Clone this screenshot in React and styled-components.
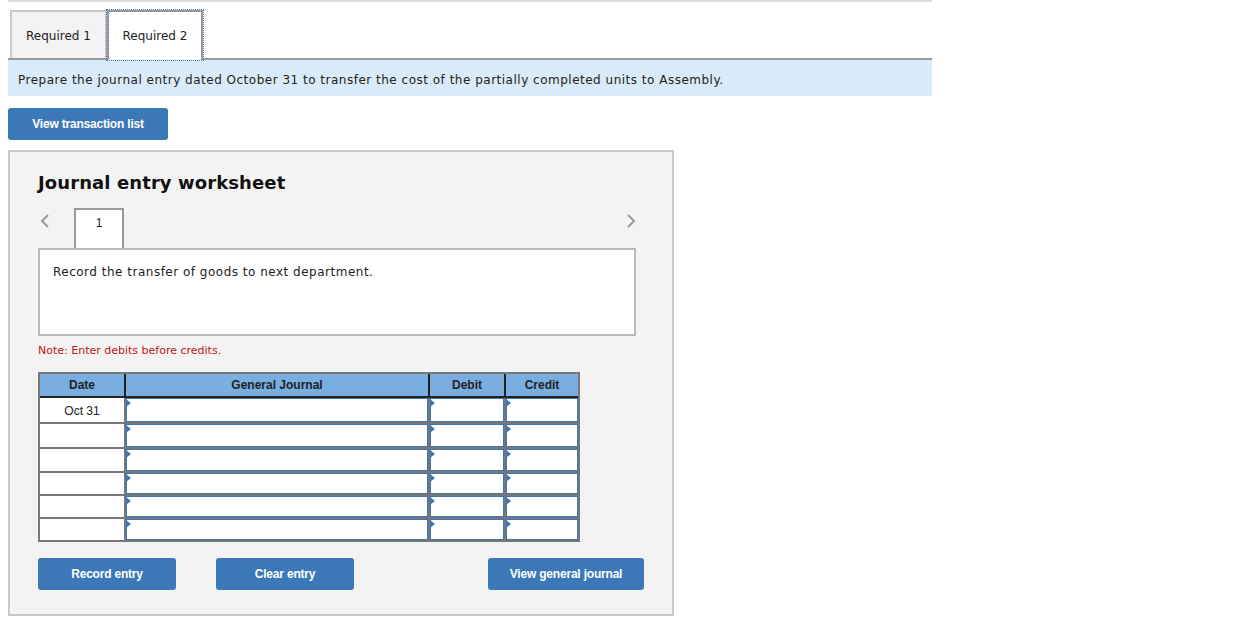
import React from "react";
import styled, { createGlobalStyle } from "styled-components";

const GlobalStyle = createGlobalStyle`
  html, body {
    margin: 0;
    padding: 0;
    background: #fff;
  }
  body {
    font-family: "DejaVu Sans", Verdana, sans-serif;
    color: #222;
  }
`;

const Page = styled.div`
  width: 924px;
  padding: 0 8px;
`;

const TopRule = styled.div`
  height: 2px;
  background: #dedede;
`;

const TabBar = styled.div`
  display: flex;
  align-items: flex-end;
  height: 56px;
  padding-left: 2px;
  border-bottom: 2px solid #999;
`;

const Tab = styled.div`
  box-sizing: border-box;
  width: ${(p) => (p.$active ? "96px" : "97px")};
  height: ${(p) => (p.$active ? "50px" : "48px")};
  margin-bottom: ${(p) => (p.$active ? "-2px" : "0")};
  display: flex;
  align-items: center;
  justify-content: center;
  padding-top: ${(p) => (p.$active ? "0" : "2px")};
  font-size: 12px;
  color: #222;
  background: ${(p) => (p.$active ? "#fff" : "#f3f3f3")};
  border: 2px solid ${(p) => (p.$active ? "#999" : "#c8c8c8")};
  border-bottom: none;
  outline: ${(p) => (p.$active ? "1px dotted #3d78b8" : "none")};
`;

const Instruction = styled.div`
  box-sizing: border-box;
  height: 36px;
  display: flex;
  align-items: center;
  padding: 3px 0 0 10px;
  background: #d9eaf8;
  font-size: 12px;
  letter-spacing: 0.5px;
  color: #222;
`;

const Button = styled.button`
  box-sizing: border-box;
  width: ${(p) => p.$width}px;
  height: 32px;
  border: none;
  border-radius: 3px;
  background: #3c78b8;
  color: #fff;
  font-family: "Liberation Sans", Arial, sans-serif;
  font-weight: bold;
  font-size: 12px;
  letter-spacing: -0.2px;
  cursor: pointer;
  padding: 0;
`;

const TopActions = styled.div`
  margin-top: 12px;
`;

const Panel = styled.div`
  box-sizing: border-box;
  width: 666px;
  height: 466px;
  margin-top: 10px;
  padding: 20px 28px 0;
  background: #f3f3f3;
  border: 2px solid #c8c8c8;
`;

const Heading = styled.h2`
  margin: 0;
  height: 22px;
  line-height: 22px;
  font-size: 18px;
  font-weight: bold;
  letter-spacing: 0.1px;
  color: #111;
`;

const NavRow = styled.div`
  display: flex;
  align-items: stretch;
  width: 598px;
  height: 40px;
  margin-top: 14px;
`;

const Chevron = styled.div`
  box-sizing: border-box;
  display: flex;
  align-items: flex-start;
  padding-top: 6px;
  width: ${(p) => (p.$right ? "auto" : "36px")};
  margin-left: ${(p) => (p.$right ? "auto" : "0")};
  padding-left: ${(p) => (p.$right ? "0" : "2px")};
`;

const PageTab = styled.div`
  box-sizing: border-box;
  width: 50px;
  height: 40px;
  padding-top: 6px;
  text-align: center;
  background: #fff;
  border: 2px solid #999;
  border-bottom: none;
  font-family: "Liberation Sans", Arial, sans-serif;
  font-size: 12px;
  color: #222;
`;

const Description = styled.div`
  box-sizing: border-box;
  width: 598px;
  height: 88px;
  padding: 15px 13px;
  background: #fff;
  border: 2px solid #bbb;
  font-size: 12px;
  letter-spacing: 0.5px;
  color: #222;
`;

const Note = styled.div`
  margin-top: 8px;
  height: 14px;
  line-height: 14px;
  font-size: 11px;
  color: #c0141b;
`;

const Table = styled.div`
  box-sizing: border-box;
  width: 542px;
  margin-top: 14px;
  padding: 2px;
  background: #777;
  font-family: "Liberation Sans", Arial, sans-serif;
  font-size: 12px;
`;

const HeaderRow = styled.div`
  display: grid;
  grid-template-columns: 84px 302px 74px 72px;
  column-gap: 2px;
  padding-bottom: 2px;
  background: #222;
`;

const HeaderCell = styled.div`
  height: 22px;
  line-height: 22px;
  text-align: center;
  font-weight: bold;
  color: #222;
  background: #7aade0;
`;

const Body = styled.div`
  display: grid;
  grid-template-columns: 84px 302px 74px 72px;
  grid-template-rows: 24px 23px 22px 21px 21px 21px;
  gap: 2px;
`;

const DateCell = styled.div`
  background: #fff;
  line-height: 26px;
  text-align: center;
  color: #222;
`;

const InputCell = styled.div`
  position: relative;
  box-sizing: border-box;
  background: #fff;
  border: 1px solid #3f74b5;

  &::before {
    content: "";
    position: absolute;
    left: -1px;
    top: 0;
    border-top: 4px solid transparent;
    border-bottom: 4px solid transparent;
    border-left: 5px solid #3f74b5;
  }
`;

const ButtonRow = styled.div`
  display: flex;
  gap: 40px;
  width: 606px;
  margin-top: 16px;

  & > :last-child {
    margin-left: auto;
  }
`;

const ChevronIcon = ({ dir }) => (
  <svg width="10" height="14" viewBox="0 0 10 14">
    <polyline
      points={dir === "left" ? "8,1 2,7 8,13" : "2,1 8,7 2,13"}
      fill="none"
      stroke="#999"
      strokeWidth="2"
    />
  </svg>
);

const rows = ["Oct 31", "", "", "", "", ""];

const App = () => {
  return (
    <Page>
      <GlobalStyle />
      <TopRule />
      <TabBar>
        <Tab>Required 1</Tab>
        <Tab $active>Required 2</Tab>
      </TabBar>
      <Instruction>
        Prepare the journal entry dated October 31 to transfer the cost of the
        partially completed units to Assembly.
      </Instruction>
      <TopActions>
        <Button $width={160}>View transaction list</Button>
      </TopActions>

      <Panel>
        <Heading>Journal entry worksheet</Heading>
        <NavRow>
          <Chevron>
            <ChevronIcon dir="left" />
          </Chevron>
          <PageTab>1</PageTab>
          <Chevron $right>
            <ChevronIcon dir="right" />
          </Chevron>
        </NavRow>
        <Description>Record the transfer of goods to next department.</Description>
        <Note>Note: Enter debits before credits.</Note>

        <Table>
          <HeaderRow>
            <HeaderCell>Date</HeaderCell>
            <HeaderCell>General Journal</HeaderCell>
            <HeaderCell>Debit</HeaderCell>
            <HeaderCell>Credit</HeaderCell>
          </HeaderRow>
          <Body>
            {rows.map((date, i) => (
              <React.Fragment key={i}>
                <DateCell>{date}</DateCell>
                <InputCell />
                <InputCell />
                <InputCell />
              </React.Fragment>
            ))}
          </Body>
        </Table>

        <ButtonRow>
          <Button $width={138}>Record entry</Button>
          <Button $width={138}>Clear entry</Button>
          <Button $width={156}>View general journal</Button>
        </ButtonRow>
      </Panel>
    </Page>
  );
};

export default App;
